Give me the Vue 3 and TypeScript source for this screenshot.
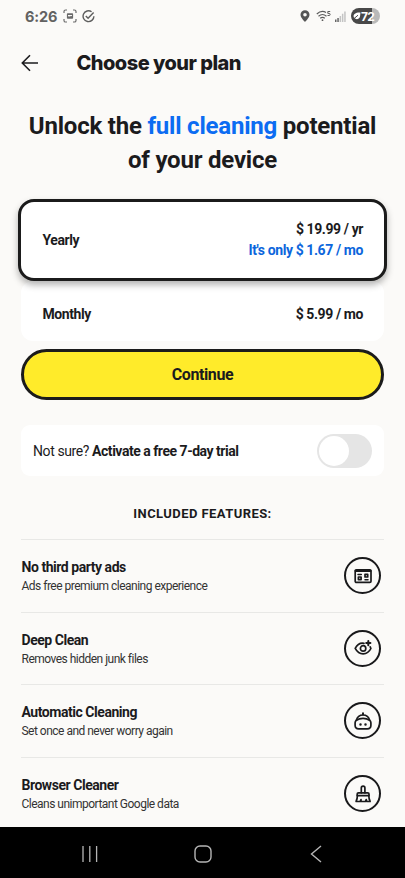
<script setup lang="ts">
import { ref } from 'vue'

interface Feature {
  title: string
  text: string
  icon: 'ads' | 'eye' | 'robot' | 'brush'
}

const plan = ref<'yearly' | 'monthly'>('yearly')
const trial = ref(false)

const features: Feature[] = [
  { title: 'No third party ads', text: 'Ads free premium cleaning experience', icon: 'ads' },
  { title: 'Deep Clean', text: 'Removes hidden junk files', icon: 'eye' },
  { title: 'Automatic Cleaning', text: 'Set once and never worry again', icon: 'robot' },
  { title: 'Browser Cleaner', text: 'Cleans unimportant Google data', icon: 'brush' },
]
</script>

<template>
  <div class="screen">
    <div class="status">
      <span class="clock">6:26</span>
      <svg class="shot" width="14" height="14" viewBox="0 0 14 14" fill="none" stroke="#6a6a6a" stroke-width="1.2">
        <path d="M1 4V2.600Q1 1 2.600 1H4M10 1h1.400Q13 1 13 2.600V4M13 10v1.400q0 1.600-1.600 1.600H10M4 13H2.600Q1 13 1 11.400V10" />
        <rect x="3.900" y="4.200" width="6.200" height="5.600" rx=".8" fill="#6a6a6a" stroke="none" />
        <path d="M5 7.800V6h4v1.300L8 6.700l-1.200 1L6 7z" fill="#fbfaf8" stroke="none" />
      </svg>
      <svg class="check" width="13" height="13" viewBox="0 0 13 13" fill="none" stroke="#5e5e5e" stroke-width="1.400">
        <path d="M9.600 1.800A5.400 5.400 0 1 0 11.900 6.200" />
        <path d="M3.800 6l2.300 2.300L11.600 2.500" />
      </svg>
      <span class="grow"></span>
      <svg class="pin" width="10" height="12" viewBox="0 0 10 12">
        <path fill="#555" fill-rule="evenodd" d="M5 .2A4.500 4.500 0 0 0 .5 4.700C.5 7.800 5 11.800 5 11.800S9.500 7.800 9.500 4.700A4.500 4.500 0 0 0 5 .2zM5 3a1.800 1.800 0 1 1 0 3.600A1.800 1.800 0 0 1 5 3z" />
      </svg>
      <svg class="wifi" width="16" height="12" viewBox="0 0 16 12" fill="none" stroke="#5c5c5c" stroke-width="1.200">
        <path d="M.8 4Q5.500-.4 10 2.500M2.500 6.200Q6.500 2.800 10.500 6.200M4.200 8.300Q6.500 6.500 8.800 8.300" />
        <circle cx="6.500" cy="10.200" r=".9" fill="#5c5c5c" stroke="none" />
        <path d="M14.200 1.500h-2.400v1.900h1.300a1 1 0 0 1 0 2.100h-1.600" stroke-width="1" />
      </svg>
      <svg class="signal" width="11" height="11" viewBox="0 0 11 11">
        <path d="M0 8.500h1.500V11H0zM2.300 7h1.500v4H2.300z" fill="#666" />
        <path d="M4.600 5h1.500v6H4.600zM6.900 2.800h1.500V11H6.900zM9.200.5h1.500V11H9.200z" fill="#c4c4c4" />
      </svg>
      <span class="battery">
        <svg width="8" height="8" viewBox="0 0 8 8">
          <path d="M7.500.5C3 .1.300 2 .6 4.600.9 7 4 8 6 6.300 7.500 5 7 3 7.500.5z" fill="#fff" />
          <path d="M.2 7.300L5 3.200" stroke="#484848" stroke-width="1" />
        </svg>
        <span>72</span>
      </span>
    </div>

    <header class="header">
      <svg class="back" width="18" height="18" viewBox="0 0 18 18" fill="none" stroke="#1c1c1e" stroke-width="1.600">
        <path d="M17 9H1.500M9 1.200L1.300 9l7.700 7.800" />
      </svg>
      <h1>Choose your plan</h1>
    </header>

    <main>
      <h2 class="headline">Unlock the <em>full cleaning</em> potential<br />of your device</h2>

      <div class="plans">
        <div class="plan yearly" @click="plan = 'yearly'">
          <span>Yearly</span>
          <div class="prices">
            <span>$ 19.99 / yr</span>
            <span class="only">It's only $ 1.67 / mo</span>
          </div>
        </div>
        <div class="plan monthly" @click="plan = 'monthly'">
          <span>Monthly</span>
          <span>$ 5.99 / mo</span>
        </div>
      </div>

      <button class="continue">Continue</button>

      <div class="trial">
        <p>Not sure? <b>Activate a free 7-day trial</b></p>
        <div class="toggle" :class="{ on: trial }" @click="trial = !trial"><i></i></div>
      </div>

      <h3>INCLUDED FEATURES:</h3>

      <section v-for="f in features" :key="f.icon" class="feature">
        <div class="copy">
          <strong>{{ f.title }}</strong>
          <small>{{ f.text }}</small>
        </div>
        <span class="badge">
          <svg width="20" height="20" viewBox="0 0 20 20" fill="none" stroke="#19191b" stroke-width="1.700" stroke-linecap="round" stroke-linejoin="round">
            <g v-if="f.icon === 'ads'">
              <rect x="2.200" y="3.800" width="15.800" height="12.600" rx="1.200" />
              <path d="M2.600 4.800h15" stroke-width="2.200" />
              <path d="M5 8.600h3.300M12 13.800h3" stroke-width="1.500" />
              <rect x="5.400" y="11" width="2.700" height="2.600" />
              <rect x="12" y="8.400" width="2.700" height="2.600" />
            </g>
            <g v-else-if="f.icon === 'eye'">
              <path d="M11 5.300C6.800 4.600 3.800 7.200 2.200 10.300c1.900 3.500 4.500 5.500 7.900 5.500s6.200-2 7.800-5.300l-.7-1.600" />
              <circle cx="10.100" cy="10.400" r="2.700" />
              <path d="M15.300 3v4.200M13.200 5.100h4.200" stroke-width="2" />
            </g>
            <g v-else-if="f.icon === 'robot'">
              <path d="M10 3.500V2.300" stroke-width="2" />
              <path d="M3.400 9.200C4.200 6 6.700 4 10 4s5.800 2 6.600 5.200" />
              <path d="M3.400 9.200C5.200 8 7 7.400 10 7.400s4.800.6 6.600 1.800q1.300.9 1.300 2.600v2.400q0 3.600-3.600 3.600H5.700q-3.600 0-3.600-3.600v-2.400q0-1.700 1.300-2.600z" />
              <path d="M7.500 13.400v.1M12.500 13.400v.1" stroke-width="2.500" />
            </g>
            <g v-else>
              <path d="M8.300 8.800V3.900q0-1.800 1.800-1.800t1.800 1.800v4.900" />
              <path d="M4.200 11.600v-1.500q0-1.300 1.300-1.300h9.200q1.300 0 1.300 1.300v1.500z" />
              <path d="M4.400 11.600q0 3.300-1.300 5.900h4l.9-1.900v1.900h4.400l.8-1.900.6 1.900h3.300q-1.300-2.600-1.300-5.900" />
            </g>
          </svg>
        </span>
      </section>
    </main>

    <nav>
      <svg width="16" height="16" viewBox="0 0 16 16" stroke="#b5b5b5" stroke-width="1.300"><path d="M1 0v16M7.800 0v16M14.600 0v16" /></svg>
      <svg class="home" width="18" height="18" viewBox="0 0 18 18" fill="none" stroke="#b5b5b5" stroke-width="1.400"><rect x="1" y="1" width="16" height="16" rx="5" /></svg>
      <svg width="12" height="18" viewBox="0 0 12 18" fill="none" stroke="#b5b5b5" stroke-width="1.400"><path d="M11 1L1.500 9l9.500 8" /></svg>
    </nav>
  </div>
</template>

<style>
body {
  background: #fbfaf8;
}
</style>

<style scoped>
* {
  box-sizing: border-box;
}
.screen {
  width: 405px;
  height: 878px;
  overflow: hidden;
  display: flex;
  flex-direction: column;
  background: #fbfaf8;
  color: #1b1b1d;
  font-family: Roboto, sans-serif;
  white-space: nowrap;
}
.status {
  height: 32px;
  flex: none;
  display: flex;
  align-items: center;
  padding: 0 25px;
}
.clock {
  width: 38px;
  font: 700 14.500px Inter, sans-serif;
  letter-spacing: -0.100px;
  color: #626262;
}
.check {
  margin-left: 5px;
}
.grow {
  flex: 1;
}
.wifi {
  margin-left: 6px;
}
.signal {
  margin-left: 3px;
}
.battery {
  width: 29px;
  height: 16px;
  margin-left: 5px;
  border-radius: 8px;
  background: linear-gradient(90deg, #484848 72%, #b9b9b9 72%);
  display: flex;
  align-items: center;
  padding-left: 2px;
  color: #fff;
  font: 700 12px Inter, sans-serif;
  letter-spacing: -0.700px;
}
.header {
  height: 62px;
  flex: none;
  display: flex;
  align-items: center;
  padding-left: 21px;
}
.header h1 {
  margin: 0 0 0 37.500px;
  font: 800 20px Inter, sans-serif;
  letter-spacing: -0.530px;
}
main {
  flex: 1;
  min-height: 0;
  overflow: hidden;
  padding: 0 21px;
}
.headline {
  margin: 16px 0 0;
  text-align: center;
  font-size: 24px;
  line-height: 33.500px;
  font-weight: 700;
  letter-spacing: -0.210px;
}
.headline em {
  font-style: normal;
  color: #0c6cf2;
}
.plans {
  margin-top: 22px;
}
.plan {
  display: flex;
  align-items: center;
  justify-content: space-between;
  background: #fff;
  font-size: 14px;
  font-weight: 700;
  letter-spacing: -0.410px;
}
.yearly {
  position: relative;
  height: 82px;
  margin: 0 -3px;
  padding: 0 21px 0 21.500px;
  border: 3px solid #1b1b1b;
  border-radius: 16px;
  box-shadow: 0 4px 7px rgba(0, 0, 0, 0.300);
}
.monthly {
  height: 60px;
  padding: 6px 21px 0 21.500px;
  border-radius: 12px;
}
.prices {
  display: flex;
  flex-direction: column;
  align-items: flex-end;
  line-height: 21px;
}
.only {
  color: #0c66dc;
}
.continue {
  display: block;
  width: 100%;
  height: 51px;
  margin-top: 8px;
  padding: 0;
  border: 3px solid #1b1b1b;
  border-radius: 26px;
  background: #ffeb2a;
  color: #1b1b1d;
  font: 700 16px Roboto, sans-serif;
  letter-spacing: -0.400px;
}
.trial {
  height: 51px;
  margin-top: 25px;
  padding: 0 12px;
  border-radius: 9px;
  background: #fff;
  display: flex;
  align-items: center;
  justify-content: space-between;
}
.trial p {
  margin: 0;
  font-size: 14px;
  letter-spacing: -0.400px;
}
.trial b {
  letter-spacing: -0.470px;
}
.toggle {
  width: 55px;
  height: 34px;
  padding: 2px;
  border-radius: 17px;
  background: #e5e5e5;
}
.toggle i {
  display: block;
  width: 30px;
  height: 30px;
  border-radius: 50%;
  background: #fff;
}
.toggle.on i {
  margin-left: 21px;
}
h3 {
  margin: 28px 0 0;
  height: 35px;
  font-size: 13px;
  line-height: 20px;
  letter-spacing: 0.430px;
  text-align: center;
}
.feature {
  height: 72.600px;
  border-top: 1px solid #e8e8e6;
  display: flex;
  align-items: center;
  justify-content: space-between;
  padding-right: 3px;
}
.copy {
  display: flex;
  flex-direction: column;
  align-items: flex-start;
  padding: 2px 0 0 0.500px;
}
.copy strong {
  font-size: 14px;
  line-height: 20px;
  letter-spacing: -0.460px;
}
.copy small {
  font-size: 12px;
  line-height: 19px;
  letter-spacing: -0.510px;
  color: #333;
}
.badge {
  width: 37px;
  height: 37px;
  border: 2px solid #19191b;
  border-radius: 50%;
  display: flex;
  align-items: center;
  justify-content: center;
}
nav {
  height: 51px;
  flex: none;
  background: #000;
  display: flex;
  align-items: center;
  justify-content: space-between;
  padding: 2px 83px 0 82px;
}
.home {
  margin-right: 2px;
}
</style>
